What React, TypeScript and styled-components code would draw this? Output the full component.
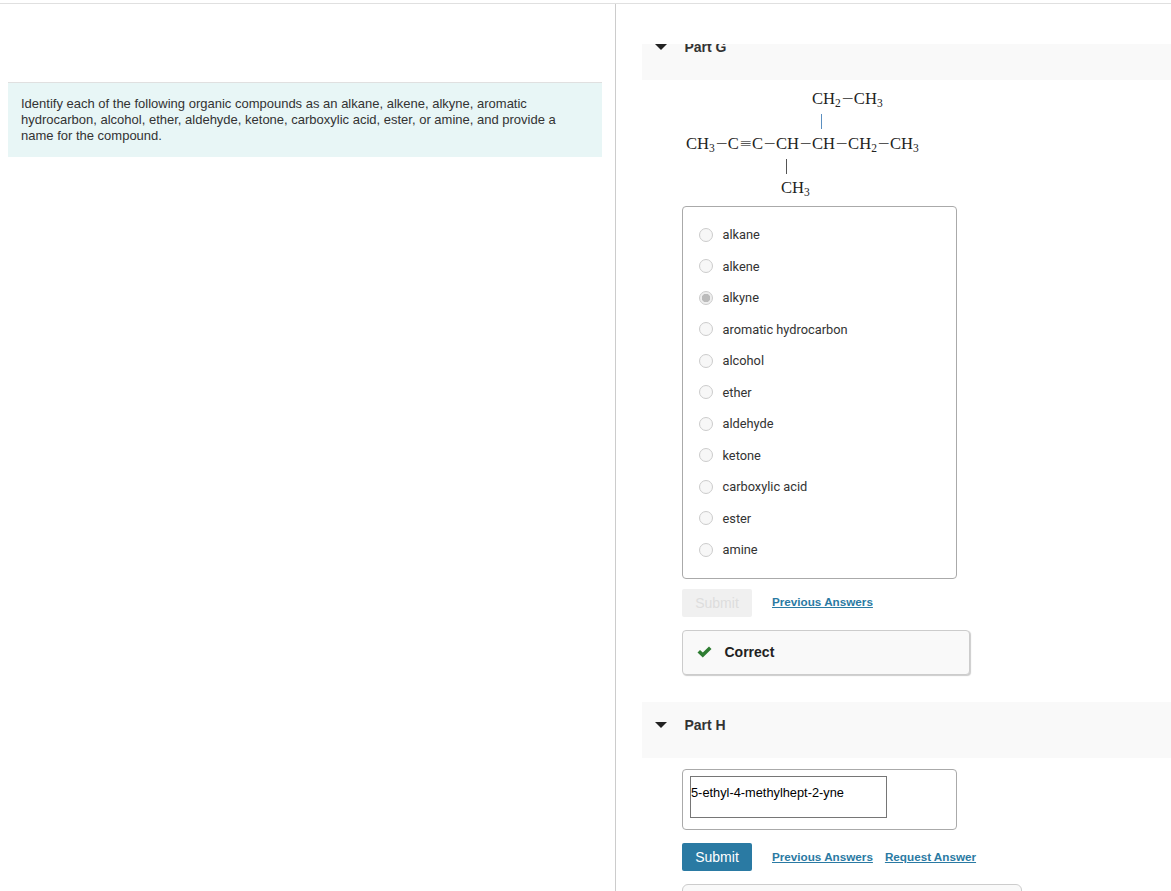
import React from 'react'
import styled, { createGlobalStyle } from 'styled-components'

const GlobalStyle = createGlobalStyle`
  html, body {
    margin: 0;
    padding: 0;
    height: 891px;
    overflow: hidden;
    background: #fff;
    font-family: "Liberation Sans", Arial, sans-serif;
  }
`

const Page = styled.div`
  height: 891px;
  padding-top: 3px;
  box-sizing: border-box;
  overflow: hidden;
`

const Columns = styled.div`
  display: flex;
  height: 888px;
  border-top: 1px solid #e0e0e0;
`

const LeftPane = styled.div`
  width: 616px;
  flex: none;
  box-sizing: border-box;
  padding: 78px 13px 0 8px;
  border-right: 1px solid #ccc;
`

const Intro = styled.div`
  background: #e8f6f6;
  border-top: 1px solid #e0e0e0;
  padding: 13px 40px 13px 13px;
  font-size: 13px;
  line-height: 16px;
  color: #333;
`

const RightPane = styled.div`
  flex: 1;
  padding: 40px 0 0 26px;
  min-width: 0;
`

const Clip = styled.div`
  overflow: hidden;
  height: 860px;
`

const PartBody = styled.div`
  margin-top: -20px;
`

const PartHeader = styled.div<{ $gapAbove?: number }>`
  height: 56px;
  box-sizing: border-box;
  margin-top: ${(p) => p.$gapAbove ?? 0}px;
  background: #f9f9f9;
  display: flex;
  align-items: flex-start;
  padding: 14px 0 0 13px;
  font-size: 14px;
  line-height: 18px;
  font-weight: bold;
  color: #333;
  gap: 17.5px;
`

const Caret = styled.span`
  width: 0;
  height: 0;
  margin-top: 6px;
  border-left: 6px solid transparent;
  border-right: 6px solid transparent;
  border-top: 6px solid #222;
`

const Content = styled.div`
  padding-left: 40px;
`

const Formula = styled.div`
  padding: 10px 0 0 4px;
  height: 126px;
  box-sizing: border-box;
  font-family: "Liberation Serif", "Times New Roman", serif;
  font-size: 16.6px;
  color: #222;
`

const FormulaRow = styled.div<{ $indent: number }>`
  height: 18px;
  line-height: 18px;
  white-space: nowrap;
  padding-left: ${(p) => p.$indent}px;
  sub {
    font-size: 11.5px;
    line-height: 0;
    vertical-align: -3px;
  }
`

const Bond = styled.div<{ $indent: number; $color: string; $after: number }>`
  width: 1px;
  height: 15px;
  margin: 6px 0 ${(p) => p.$after}px ${(p) => p.$indent}px;
  background: ${(p) => p.$color};
`

const Dash = styled.span`
  display: inline-block;
  width: 13px;
  text-align: center;
  color: #555;
  transform: scaleX(1.25);
`

const AnswerBox = styled.div`
  width: 275px;
  box-sizing: border-box;
  border: 1px solid #aaa;
  border-radius: 4px;
`

const OptionList = styled(AnswerBox)`
  height: 373px;
  padding: 11.8px 0 0 16px;
`

const Option = styled.label`
  display: flex;
  align-items: center;
  height: 31.5px;
  gap: 9.5px;
  font-family: Roboto, sans-serif;
  font-size: 12.8px;
  color: #333;
`

const Radio = styled.span<{ $checked?: boolean }>`
  width: 14px;
  height: 14px;
  box-sizing: border-box;
  border-radius: 50%;
  border: 1px solid #ccc;
  background: ${(p) => (p.$checked ? 'radial-gradient(circle, #bbb 0 4px, #eee 4.5px)' : '#f7f7f7')};
`

const Actions = styled.div<{ $gapAbove: number }>`
  display: flex;
  align-items: center;
  gap: 20px;
  margin-top: ${(p) => p.$gapAbove}px;
`

const SubmitButton = styled.button<{ $disabled?: boolean }>`
  width: 70px;
  height: 28px;
  padding: 0;
  border: 0;
  border-radius: 2px;
  font-family: inherit;
  font-size: 14px;
  background: ${(p) => (p.$disabled ? '#f0f0f0' : '#2a7aa3')};
  color: ${(p) => (p.$disabled ? '#ddd' : '#fff')};
`

const LinkRow = styled.div<{ $lift: number }>`
  display: flex;
  gap: 12px;
  margin-bottom: ${(p) => p.$lift}px;
`

const TextLink = styled.a`
  font-size: 11.7px;
  font-weight: bold;
  color: #2a7aa3;
  text-decoration: underline;
`

const Feedback = styled.div`
  display: flex;
  align-items: center;
  gap: 12.5px;
  width: 288px;
  height: 45px;
  box-sizing: border-box;
  margin-top: 13px;
  padding: 0 0 2px 14px;
  background: #f9f9f9;
  border: 1px solid #ccc;
  border-radius: 4px;
  box-shadow: 1px 1px 1px #ccc;
  font-size: 14px;
  font-weight: bold;
  color: #222;
`

const NameBox = styled(AnswerBox)`
  height: 61px;
  margin-top: 11px;
  padding: 6px 0 0 7px;
`

const NameInput = styled.div`
  width: 197px;
  height: 42px;
  box-sizing: border-box;
  border: 1px solid #767676;
  padding: 4px 0 0 0;
  font-size: 12.8px;
  line-height: 23px;
  color: #000;
`

const NextFeedback = styled.div`
  width: 340px;
  height: 40px;
  margin-top: 13px;
  background: #f9f9f9;
  border: 1px solid #ccc;
  border-radius: 6px;
  box-sizing: border-box;
`

const options = [
  'alkane',
  'alkene',
  'alkyne',
  'aromatic hydrocarbon',
  'alcohol',
  'ether',
  'aldehyde',
  'ketone',
  'carboxylic acid',
  'ester',
  'amine',
]

const App: React.FC = () => {
  return (
    <Page>
      <GlobalStyle />
      <Columns>
        <LeftPane>
          <Intro>
            Identify each of the following organic compounds as an alkane, alkene, alkyne, aromatic
            hydrocarbon, alcohol, ether, aldehyde, ketone, carboxylic acid, ester, or amine, and
            provide a name for the compound.
          </Intro>
        </LeftPane>
        <RightPane>
          <Clip>
            <PartBody>
              <PartHeader>
                <Caret />
                Part G
              </PartHeader>
              <Content>
                <Formula>
                  <FormulaRow $indent={126}>
                    CH<sub>2</sub>
                    <Dash>−</Dash>CH<sub>3</sub>
                  </FormulaRow>
                  <Bond $indent={135} $color="#5b8fc0" $after={6} />
                  <FormulaRow $indent={0}>
                    CH<sub>3</sub>
                    <Dash>−</Dash>C<Dash>≡</Dash>C<Dash>−</Dash>CH<Dash>−</Dash>CH<Dash>−</Dash>CH
                    <sub>2</sub>
                    <Dash>−</Dash>CH<sub>3</sub>
                  </FormulaRow>
                  <Bond $indent={100} $color="#555" $after={5} />
                  <FormulaRow $indent={95}>
                    CH<sub>3</sub>
                  </FormulaRow>
                </Formula>
                <OptionList>
                  {options.map((name) => (
                    <Option key={name}>
                      <Radio $checked={name === 'alkyne'} />
                      {name}
                    </Option>
                  ))}
                </OptionList>
                <Actions $gapAbove={10}>
                  <SubmitButton $disabled>Submit</SubmitButton>
                  <LinkRow $lift={4}>
                    <TextLink>Previous Answers</TextLink>
                  </LinkRow>
                </Actions>
                <Feedback>
                  <svg width="15" height="12" viewBox="0 0 15 12">
                    <path d="M0.5 6.5 L3 4 L5.8 6.6 L12 0.6 L14.5 3 L5.8 11.4 Z" fill="#2e7d32" />
                  </svg>
                  Correct
                </Feedback>
              </Content>
              <PartHeader $gapAbove={27}>
                <Caret />
                Part H
              </PartHeader>
              <Content>
                <NameBox>
                  <NameInput>5-ethyl-4-methylhept-2-yne</NameInput>
                </NameBox>
                <Actions $gapAbove={13}>
                  <SubmitButton>Submit</SubmitButton>
                  <LinkRow $lift={2}>
                    <TextLink>Previous Answers</TextLink>
                    <TextLink>Request Answer</TextLink>
                  </LinkRow>
                </Actions>
                <NextFeedback />
              </Content>
            </PartBody>
          </Clip>
        </RightPane>
      </Columns>
    </Page>
  )
}

export default App
